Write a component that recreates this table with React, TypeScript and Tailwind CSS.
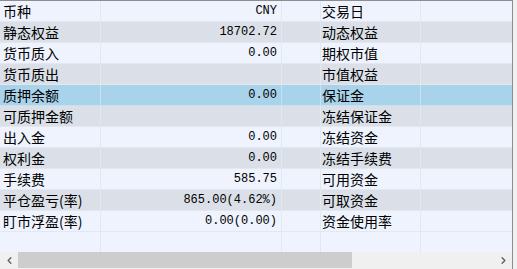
import { ChevronLeft, ChevronRight } from 'lucide-react'

type Row = { label: string; value: string; label2: string }

const rows: Row[] = [
  { label: '币种', value: 'CNY', label2: '交易日' },
  { label: '静态权益', value: '18702.72', label2: '动态权益' },
  { label: '货币质入', value: '0.00', label2: '期权市值' },
  { label: '货币质出', value: '', label2: '市值权益' },
  { label: '质押余额', value: '0.00', label2: '保证金' },
  { label: '可质押金额', value: '', label2: '冻结保证金' },
  { label: '出入金', value: '0.00', label2: '冻结资金' },
  { label: '权利金', value: '0.00', label2: '冻结手续费' },
  { label: '手续费', value: '585.75', label2: '可用资金' },
  { label: '平仓盈亏(率)', value: '865.00(4.62%)', label2: '可取资金' },
  { label: '盯市浮盈(率)', value: '0.00(0.00)', label2: '资金使用率' },
]

const SELECTED = 4

function rowClass(index: number) {
  if (index === SELECTED) {
    return 'bg-[#a9d3ea] border-[#c6e2f1]'
  }
  if (index % 2 === 1) {
    return 'bg-[#dbe0e8] border-[#e4e8ee]'
  }
  return 'bg-[#eef3fd] border-[#e2e8f3]'
}

export default function App() {
  return (
    <div className="flex h-[269px] w-[517px] overflow-hidden bg-[#f0f0f0] font-['Noto_Sans_CJK_SC',sans-serif] text-[14px] text-black">
      <div className="flex w-[513px] flex-col border-r border-t border-[#8d8d8d] bg-[#eef3fd]">
        {rows.map((row, i) => (
          <div
            key={row.label}
            className={`grid h-[21px] grid-cols-[101px_181px_39px_100px_91px] border-b leading-[20px] ${rowClass(i)}`}
          >
            <div className="truncate border-r border-inherit pl-[3px]">{row.label}</div>
            <div className="border-r border-inherit pr-[4px] text-right font-['Liberation_Mono',monospace] text-[12px]">
              {row.value}
            </div>
            <div className="border-r border-inherit" />
            <div className="truncate border-r border-inherit pl-[1px]">{row.label2}</div>
            <div />
          </div>
        ))}
        <div className="grid h-[20px] grid-cols-[101px_181px_39px_100px_91px] bg-[#eef3fd]">
          <div className="border-r border-[#e2e8f3]" />
          <div className="border-r border-[#e2e8f3]" />
          <div className="border-r border-[#e2e8f3]" />
          <div className="border-r border-[#e2e8f3]" />
          <div />
        </div>
        <div className="flex h-[16px] items-center bg-[#f0f0f0]">
          <div className="flex w-[18px] items-center justify-center text-[#606060]">
            <ChevronLeft className="h-[11px] w-[11px]" strokeWidth={3} />
          </div>
          <div className="h-full w-[334px] bg-[#cdcdcd]" />
          <div className="flex-1" />
          <div className="flex w-[18px] items-center justify-center text-[#606060]">
            <ChevronRight className="h-[11px] w-[11px]" strokeWidth={3} />
          </div>
        </div>
        <div className="flex-1 bg-[#f0f0f0]" />
      </div>
    </div>
  )
}
